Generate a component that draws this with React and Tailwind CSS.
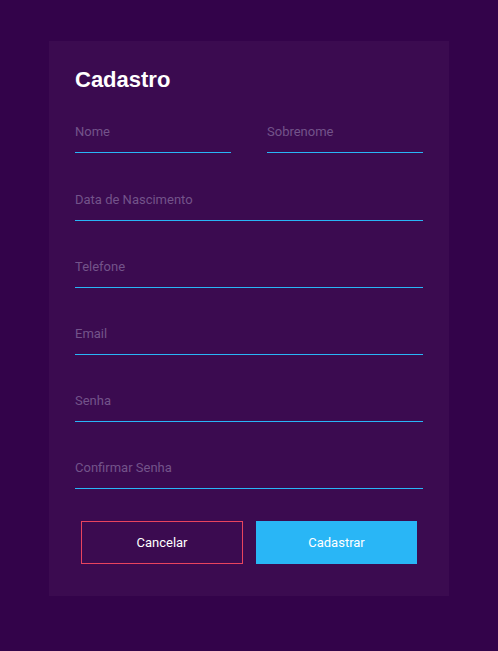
import React from 'react'

function Field({ placeholder, type = 'text', className = '' }) {
  return (
    <div className={`flex flex-col ${className}`}>
      <input
        type={type}
        placeholder={placeholder}
        className="w-full h-[37px] bg-transparent border-0 border-b border-[#29b6f6] outline-none text-[13px] text-white placeholder:text-[#73538a] pb-[5px] font-['Roboto',sans-serif]"
      />
    </div>
  )
}

export default function App() {
  return (
    <div className="min-h-[651px] w-full bg-[#33034a] pt-[41px] flex justify-center font-['Liberation_Sans',Arial,sans-serif]">
      <div className="w-[400px] h-[555px] bg-[#3b0b50] px-[26px] pt-[26px]">
        <h1 className="text-[22px] leading-[26px] font-bold text-white">Cadastro</h1>
        <form className="mt-[23px] flex flex-col gap-[30px]" onSubmit={e => e.preventDefault()}>
          <div className="flex gap-[36px] mb-[1px]">
            <Field placeholder="Nome" className="flex-1" />
            <Field placeholder="Sobrenome" className="flex-1" />
          </div>
          <Field placeholder="Data de Nascimento" />
          <Field placeholder="Telefone" type="tel" />
          <Field placeholder="Email" type="email" />
          <Field placeholder="Senha" type="password" />
          <Field placeholder="Confirmar Senha" type="password" />
          <div className="flex justify-between px-[6px] mt-[2px]">
            <button type="button" className="w-[162px] h-[43px] border border-[#e8445e] text-white text-[13px] font-['Roboto',sans-serif]">
              Cancelar
            </button>
            <button type="submit" className="w-[161px] h-[43px] bg-[#29b6f6] text-white text-[13px] font-['Roboto',sans-serif]">
              Cadastrar
            </button>
          </div>
        </form>
      </div>
    </div>
  )
}
